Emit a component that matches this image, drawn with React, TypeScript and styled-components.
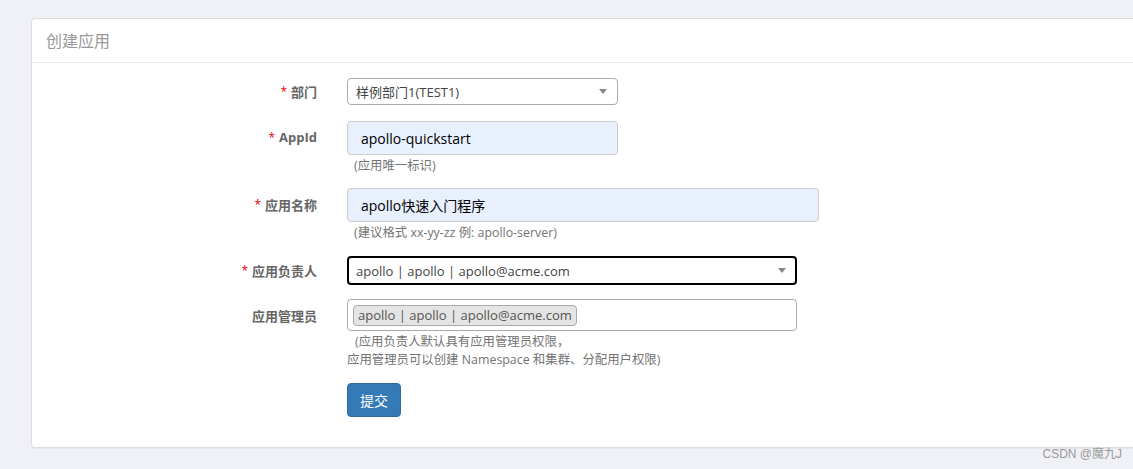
import styled, { createGlobalStyle } from 'styled-components';

const GlobalStyle = createGlobalStyle`
  html, body {
    margin: 0;
    padding: 0;
    background: #f0f1f6;
    overflow: hidden;
    font-family: "Open Sans", "Noto Sans CJK SC", sans-serif;
  }
  #root {
    height: 469px;
    position: relative;
  }
`;

function App() {
  return (
    <Page>
      <GlobalStyle />
      <Panel>
        <PanelHeader>创建应用</PanelHeader>
        <PanelBody>
          <FormGroup $gap={16}>
            <Label $h={27}>
              <Star>*</Star>部门
            </Label>
            <Control>
              <Select $width={271} $h={27}>
                <span>样例部门1(TEST1)</span>
                <Arrow />
              </Select>
            </Control>
          </FormGroup>

          <FormGroup $gap={13}>
            <Label $h={32}>
              <Star>*</Star>AppId
            </Label>
            <Control>
              <Input $width={271}>apollo-quickstart</Input>
              <Help $indent={7}>(应用唯一标识)</Help>
            </Control>
          </FormGroup>

          <FormGroup $gap={14}>
            <Label $h={32}>
              <Star>*</Star>应用名称
            </Label>
            <Control>
              <Input $width={472}>apollo快速入门程序</Input>
              <Help $indent={7}>(建议格式 xx-yy-zz 例: apollo-server)</Help>
            </Control>
          </FormGroup>

          <FormGroup $gap={14}>
            <Label $h={29}>
              <Star>*</Star>应用负责人
            </Label>
            <Control>
              <Select $width={450} $h={29} $focused>
                <span>apollo | apollo | apollo@acme.com</span>
                <Arrow />
              </Select>
            </Control>
          </FormGroup>

          <FormGroup $gap={14}>
            <Label $h={32}>应用管理员</Label>
            <Control>
              <MultiSelect>
                <Tag>apollo | apollo | apollo@acme.com</Tag>
              </MultiSelect>
              <Help $indent={0}>
                <FirstLine>(应用负责人默认具有应用管理员权限，</FirstLine>
                <br />
                应用管理员可以创建 Namespace 和集群、分配用户权限)
              </Help>
            </Control>
          </FormGroup>

          <FormGroup $gap={0}>
            <span />
            <Control>
              <SubmitButton>提交</SubmitButton>
            </Control>
          </FormGroup>
        </PanelBody>
      </Panel>
      <Watermark>CSDN @魔九J</Watermark>
    </Page>
  );
}

const Page = styled.div`
  padding-top: 18px;
  padding-left: 31px;
  height: 469px;
  box-sizing: border-box;
`;

const Panel = styled.section`
  width: 1130px;
  background: #fff;
  border: 1px solid #dcdcdc;
  border-radius: 4px;
  box-shadow: 0 1px 1px rgba(0, 0, 0, 0.05);
`;

const PanelHeader = styled.div`
  height: 43px;
  line-height: 43px;
  padding-left: 14px;
  border-bottom: 1px solid #ececf2;
  color: #999;
  font-size: 16px;
  font-family: "Noto Sans CJK SC", sans-serif;
`;

const PanelBody = styled.div`
  padding: 15px 0 30px;
`;

const FormGroup = styled.div<{ $gap: number }>`
  display: grid;
  grid-template-columns: 285px 1fr;
  column-gap: 30px;
  margin-bottom: ${(p) => p.$gap}px;
`;

const Label = styled.label<{ $h: number }>`
  height: ${(p) => p.$h}px;
  display: flex;
  align-items: center;
  justify-content: flex-end;
  font-size: 13px;
  font-weight: bold;
  color: #666;
  font-family: "Open Sans", "Noto Sans CJK SC", sans-serif;
`;

const Star = styled.span`
  color: #e00;
  font-size: 12px;
  margin-right: 4px;
  font-weight: normal;
`;

const Control = styled.div`
  display: flex;
  flex-direction: column;
  align-items: flex-start;
`;

const Select = styled.div<{ $width: number; $h: number; $focused?: boolean }>`
  width: ${(p) => p.$width}px;
  height: ${(p) => p.$h}px;
  box-sizing: border-box;
  border: ${(p) => (p.$focused ? '2px solid #000' : '1px solid #aaa')};
  border-radius: 4px;
  display: flex;
  align-items: center;
  justify-content: space-between;
  padding: 0 ${(p) => (p.$focused ? 7 : 8)}px;
  font-size: 13px;
  color: #444;
  background: #fff;
`;

const Arrow = styled.span`
  width: 0;
  height: 0;
  border-style: solid;
  border-width: 5px 4px 0 4px;
  border-color: #888 transparent transparent transparent;
  margin-right: 2px;
`;

const Input = styled.div<{ $width: number }>`
  width: ${(p) => p.$width}px;
  height: 34px;
  box-sizing: border-box;
  border: 1px solid #ccc;
  border-radius: 4px;
  background: #e8f0fe;
  display: flex;
  align-items: center;
  padding-left: 13px;
  font-size: 14px;
  color: #000;
`;

const Help = styled.div<{ $indent: number }>`
  font-size: 12.4px;
  line-height: 18px;
  color: #737373;
  padding-top: 2px;
  padding-left: ${(p) => p.$indent}px;
`;

const FirstLine = styled.span`
  padding-left: 8px;
`;

const MultiSelect = styled.div`
  width: 450px;
  height: 32px;
  box-sizing: border-box;
  border: 1px solid #aaa;
  border-radius: 4px;
  display: flex;
  align-items: center;
  padding-left: 5px;
`;

const Tag = styled.span`
  height: 21px;
  box-sizing: border-box;
  line-height: 19px;
  background: #e4e4e4;
  border: 1px solid #aaa;
  border-radius: 4px;
  padding: 0 4px;
  font-size: 13px;
  color: #555;
`;

const SubmitButton = styled.button`
  height: 34px;
  padding: 0 12px;
  background: #337ab7;
  border: 1px solid #2e6da4;
  border-radius: 4px;
  color: #fff;
  font-size: 14px;
  font-family: "Noto Sans CJK SC", sans-serif;
`;

const Watermark = styled.div`
  position: absolute;
  right: 11px;
  bottom: 8px;
  font-size: 12px;
  color: #999;
  font-family: "Liberation Sans", "Noto Sans CJK SC", sans-serif;
`;

export default App;
